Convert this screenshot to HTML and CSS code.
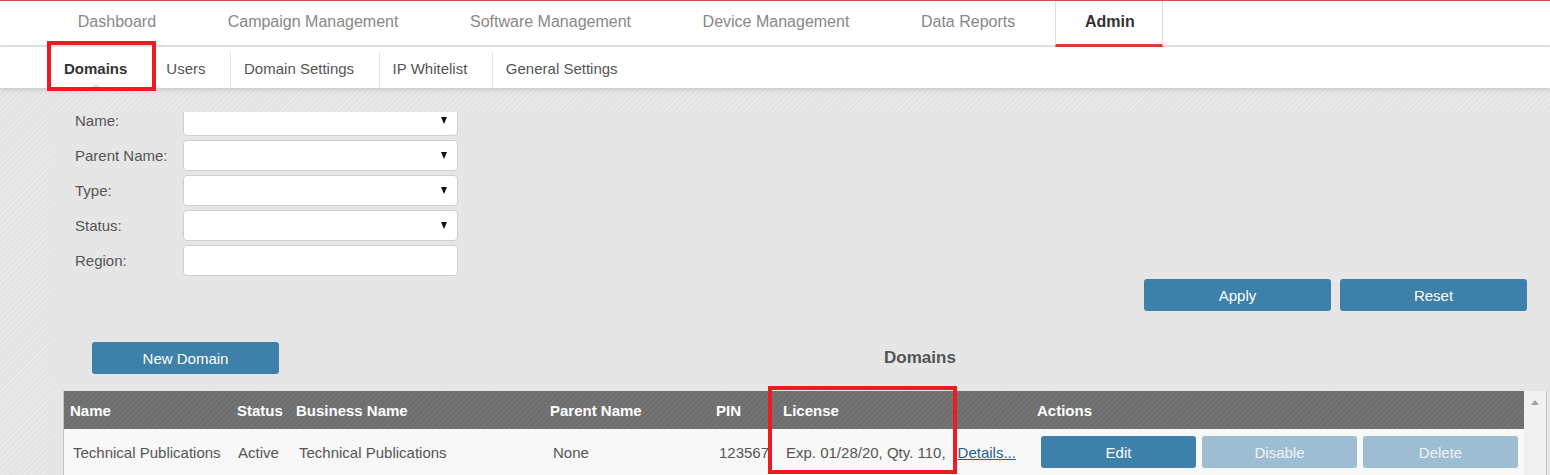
FILE: index.html
```html
<!DOCTYPE html>
<html lang="en">
<head>
<meta charset="utf-8">
<title>Admin - Domains</title>
<link rel="stylesheet" href="styles.css">
</head>
<body>
<nav class="topnav">
  <a class="nav-item">Dashboard</a>
  <a class="nav-item">Campaign Management</a>
  <a class="nav-item">Software Management</a>
  <a class="nav-item">Device Management</a>
  <a class="nav-item">Data Reports</a>
  <a class="nav-item nav-active">Admin</a>
</nav>
<nav class="subnav">
  <a class="sub-item sub-active">Domains</a>
  <a class="sub-item">Users</a>
  <a class="sub-item">Domain Settings</a>
  <a class="sub-item">IP Whitelist</a>
  <a class="sub-item sub-last">General Settings</a>
</nav>
<main class="panel">
  <div class="panel-inner">
    <div class="filters">
      <div class="field"><span class="field-label">Name:</span><div class="select"><span class="caret"></span></div></div>
      <div class="field"><span class="field-label">Parent Name:</span><div class="select"><span class="caret"></span></div></div>
      <div class="field"><span class="field-label">Type:</span><div class="select"><span class="caret"></span></div></div>
      <div class="field"><span class="field-label">Status:</span><div class="select"><span class="caret"></span></div></div>
      <div class="field"><span class="field-label">Region:</span><div class="select"></div></div>
    </div>
    <div class="filter-actions">
      <button class="btn">Apply</button>
      <button class="btn">Reset</button>
    </div>
    <div class="list-head">
      <button class="btn">New Domain</button>
      <h2 class="list-title">Domains</h2>
    </div>
    <div class="grid-wrap">
      <table class="grid">
        <colgroup>
          <col class="c-name"><col class="c-status"><col class="c-biz"><col class="c-parent"><col class="c-pin"><col class="c-lic"><col class="c-act">
        </colgroup>
        <thead>
          <tr>
            <th>Name</th><th>Status</th><th>Business Name</th><th>Parent Name</th><th>PIN</th><th>License</th><th>Actions</th>
          </tr>
        </thead>
        <tbody>
          <tr>
            <td>Technical Publications</td>
            <td class="st">Active</td>
            <td>Technical Publications</td>
            <td>None</td>
            <td>123567</td>
            <td class="lic">Exp. 01/28/20, Qty. 110,<a class="details">Details...</a></td>
            <td class="act">
              <div class="act-btns">
                <button class="btn btn-sm">Edit</button>
                <button class="btn btn-sm btn-off">Disable</button>
                <button class="btn btn-sm btn-off">Delete</button>
              </div>
            </td>
          </tr>
        </tbody>
      </table>
      <div class="vscroll"><span class="vscroll-up"></span></div>
    </div>
  </div>
</main>
<div class="annot annot-domains"></div>
<div class="annot annot-license"></div>
</body>
</html>
```
FILE: styles.css
```css
html, body {
  margin: 0;
  padding: 0;
}
body {
  height: 475px;
  overflow: hidden;
  font-family: "Liberation Sans", Arial, sans-serif;
  background: repeating-linear-gradient(135deg, #e9e9e9 0 2px, #e3e3e3 2px 4px);
  position: relative;
}

/* top navigation */
.topnav {
  display: flex;
  height: 47px;
  box-sizing: border-box;
  border-top: 1px solid #d65050;
  border-bottom: 2px solid #e3e3e3;
  background: #fff;
  padding-left: 42px;
}
.nav-item {
  display: flex;
  align-items: center;
  padding: 0 35.8px 3px;
  font-size: 16px;
  color: #888;
  text-decoration: none;
  white-space: nowrap;
}
.nav-active {
  margin-left: 4px;
  margin-bottom: -2px;
  padding: 0 27px 2px 29px;
  border-left: 1px solid #dedede;
  border-right: 1px solid #dedede;
  border-bottom: 3px solid #e53935;
  color: #333;
  font-weight: bold;
}

/* sub navigation */
.subnav {
  display: flex;
  height: 41px;
  padding-left: 51px;
  background: #fff;
  box-shadow: 0 2px 5px rgba(0, 0, 0, 0.12);
  position: relative;
  z-index: 1;
}
.sub-item {
  display: flex;
  align-items: center;
  margin-top: 5px;
  height: 36px;
  box-sizing: border-box;
  padding: 0 24.5px 3px 13px;
  border-right: 1px solid #e2e2e2;
  font-size: 15px;
  color: #555;
  white-space: nowrap;
  position: relative;
}
.sub-last {
  border-right: 0;
}
.sub-active {
  padding-right: 25px;
  font-weight: bold;
  color: #333;
}
.sub-active::after {
  content: "";
  position: absolute;
  bottom: 0;
  left: 39px;
  border-left: 6px solid transparent;
  border-right: 6px solid transparent;
  border-bottom: 4px solid #e2e2e2;
}

/* main panel */
.panel {
  margin: 24px 0 0 50px;
  background: #e6e6e6;
  height: 400px;
  overflow: hidden;
}
.panel-inner {
  margin-top: -7px;
}
.filters {
  display: flex;
  flex-direction: column;
  gap: 4px;
  padding-left: 25px;
}
.field {
  display: flex;
  align-items: center;
  height: 31px;
}
.field-label {
  width: 108px;
  font-size: 15px;
  color: #555;
}
.select {
  width: 275px;
  height: 31px;
  box-sizing: border-box;
  border: 1px solid #cfcfcf;
  border-radius: 4px;
  background: #fff;
  display: flex;
  align-items: center;
  justify-content: flex-end;
  padding-right: 10px;
}
.caret {
  width: 0;
  height: 0;
  border-left: 3.5px solid transparent;
  border-right: 3.5px solid transparent;
  border-top: 7px solid #111;
}

.btn {
  width: 187px;
  height: 32px;
  border: 0;
  border-radius: 3px;
  background: #3d80aa;
  color: #fff;
  font-family: "Liberation Sans", Arial, sans-serif;
  font-size: 15px;
  padding: 0;
}
.filter-actions {
  display: flex;
  justify-content: flex-end;
  gap: 9px;
  margin-top: 3px;
  padding-right: 23px;
}
.list-head {
  display: flex;
  align-items: center;
  margin-top: 31px;
  padding-left: 42px;
}
.list-title {
  flex: 1;
  margin: 0;
  padding-left: 11px;
  text-align: center;
  font-size: 17px;
  font-weight: bold;
  color: #555;
}

/* grid */
.grid-wrap {
  display: flex;
  margin: 17px 3px 0 13px;
  border-left: 1px solid #c4c4c4;
  border-right: 1px solid #c4c4c4;
}
.grid {
  flex: 1;
  border-collapse: collapse;
  table-layout: fixed;
}
.c-name { width: 167px; }
.c-status { width: 59px; }
.c-biz { width: 254px; }
.c-parent { width: 166px; }
.c-pin { width: 67px; }
.c-lic { width: 254px; }
.grid thead tr {
  background: repeating-linear-gradient(135deg, #747474 0 2px, #6d6d6d 2px 4px);
}
.grid th {
  height: 38px;
  padding: 0 0 0 6px;
  text-align: left;
  font-size: 15px;
  font-weight: bold;
  color: #fff;
  white-space: nowrap;
}
.grid tbody tr {
  background: #f8f8f8;
}
.grid td {
  height: 32px;
  padding: 7px 0 7px 9px;
  font-size: 15px;
  color: #555;
  white-space: nowrap;
  overflow: hidden;
}
.grid td.st {
  padding-left: 7px;
}
.details {
  margin-left: 12px;
  color: #1f5f95;
  text-decoration: underline;
}
.grid td.act {
  padding-left: 10px;
}
.act-btns {
  display: flex;
  gap: 6px;
}
.btn-sm {
  width: 155px;
}
.btn-off {
  background: #9dbdd3;
  color: #eef4f8;
}
.vscroll {
  width: 22px;
  background: #f1f1f1;
  display: flex;
  flex-direction: column;
  align-items: center;
  padding-top: 9px;
}
.vscroll-up {
  width: 0;
  height: 0;
  border-left: 4.5px solid transparent;
  border-right: 4.5px solid transparent;
  border-bottom: 5px solid #a3a3a3;
}

/* annotation overlays */
.annot {
  position: absolute;
  box-sizing: border-box;
  border: 4px solid #ed1c24;
  pointer-events: none;
  z-index: 5;
}
.annot-domains {
  left: 47px;
  top: 41px;
  width: 109px;
  height: 50px;
}
.annot-license {
  left: 768px;
  top: 386px;
  width: 189px;
  height: 88px;
}
```
